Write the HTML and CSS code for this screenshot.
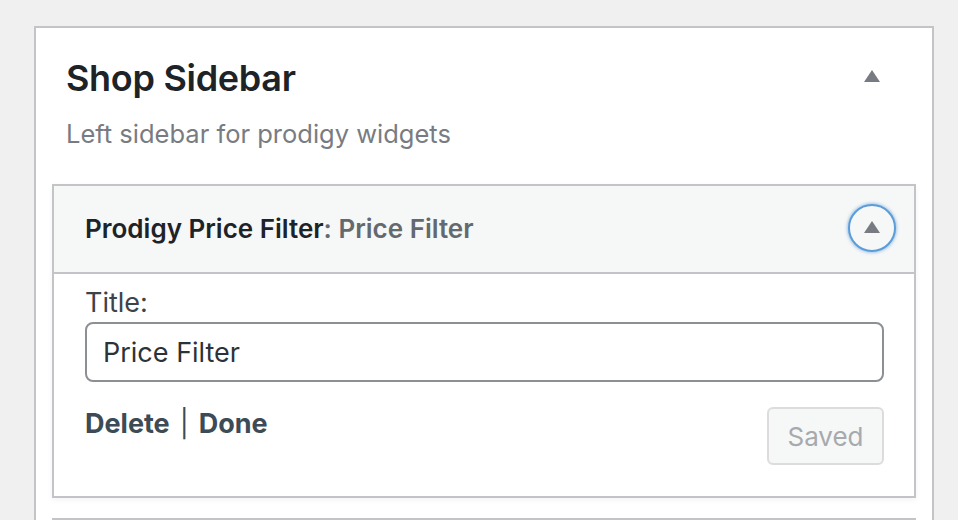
FILE: index.html
```html
<!DOCTYPE html>
<html lang="en">
<head>
<meta charset="utf-8">
<title>Shop Sidebar</title>
<link rel="stylesheet" href="styles.css">
</head>
<body>
<div class="panel">
  <div class="panel-head">
    <div class="panel-titles">
      <h2 class="panel-title">Shop Sidebar</h2>
      <p class="panel-desc">Left sidebar for prodigy widgets</p>
    </div>
    <span class="tri tri-head"></span>
  </div>
  <div class="widget">
    <div class="widget-top">
      <h3 class="widget-title">Prodigy Price Filter<span class="widget-name">: Price Filter</span></h3>
      <button class="toggle" type="button" aria-label="Toggle widget"><span class="tri"></span></button>
    </div>
    <div class="widget-inside">
      <label class="field-label" for="title">Title:</label>
      <input class="field-input" id="title" type="text" value="Price Filter">
      <div class="actions">
        <div class="links"><a class="link" href="#">Delete</a><span class="sep">|</span><a class="link" href="#">Done</a></div>
        <button class="saved" type="button" disabled>Saved</button>
      </div>
    </div>
  </div>
  <div class="widget widget-next"></div>
</div>
</body>
</html>
```

FILE: styles.css
```css
* { box-sizing: border-box; }
html, body { margin: 0; padding: 0; }
body {
  background: #f0f0f1;
  font-family: Inter, "Noto Sans", "Liberation Sans", sans-serif;
  color: #1d2327;
  height: 520px;
  overflow: hidden;
}
.panel {
  margin: 26px 0 0 34px;
  width: 900px;
  background: #fff;
  border: 2px solid #c3c4c7;
  border-bottom: none;
  padding: 0 16px 40px;
}
.panel-head {
  display: flex;
  align-items: flex-start;
  justify-content: space-between;
  padding: 28px 36px 0 14px;
  height: 156px;
}
.panel-title {
  margin: 0;
  font-size: 36px;
  font-weight: 600;
  line-height: 44px;
  letter-spacing: -0.3px;
}
.panel-desc {
  margin: 16px 0 0;
  font-size: 25.5px;
  line-height: 36px;
  color: #787c82;
}
.tri {
  display: block;
  width: 0;
  height: 0;
  border-left: 8px solid transparent;
  border-right: 8px solid transparent;
  border-bottom: 12px solid #787c82;
}
.tri-head { margin-top: 14px; }
.widget {
  border: 2px solid #c3c4c7;
  background: #fff;
  box-shadow: 0 2px 6px rgba(0,0,0,0.05);
}
.widget-top {
  display: flex;
  align-items: center;
  justify-content: space-between;
  height: 88px;
  padding: 0 18px 0 31px;
  background: #f6f7f7;
  border-bottom: 2px solid #c3c4c7;
}
.widget-title {
  margin: 0;
  font-size: 26px;
  font-weight: 600;
  line-height: 36px;
  color: #1d2327;
}
.widget-name { color: #646970; }
.toggle {
  width: 48px;
  height: 48px;
  border-radius: 50%;
  border: 2px solid #5b9dd9;
  box-shadow: 0 0 3px 1px rgba(79,148,212,0.5);
  background: #f6f7f7;
  display: flex;
  align-items: center;
  justify-content: center;
  padding: 0 0 2px;
  margin-top: -2px;
}
.widget-inside {
  padding: 10px 30px 31px 31px;
}
.field-label {
  display: block;
  font-size: 27px;
  line-height: 38px;
  color: #3c434a;
}
.field-input {
  display: block;
  width: 100%;
  height: 60px;
  margin: 0;
  padding: 0 16px;
  border: 2px solid #8c8f94;
  border-radius: 8px;
  font-family: inherit;
  font-size: 27px;
  color: #2c3338;
  background: #fff;
  outline: none;
}
.actions {
  display: flex;
  justify-content: space-between;
  align-items: flex-start;
  margin-top: 25px;
}
.links {
  display: flex;
  align-items: center;
  font-size: 27px;
  line-height: 34px;
}
.link {
  color: #3c4b56;
  font-weight: 700;
  text-decoration: none;
}
.sep {
  color: #3c4b56;
  margin: 0 10px;
}
.saved {
  width: 117px;
  height: 58px;
  border: 2px solid #dcdcde;
  border-radius: 6px;
  background: #f6f7f7;
  color: #a7aaad;
  font-family: inherit;
  font-size: 26px;
  padding: 0;
}
.widget-next {
  margin-top: 20px;
  height: 60px;
  box-shadow: none;
}
```
